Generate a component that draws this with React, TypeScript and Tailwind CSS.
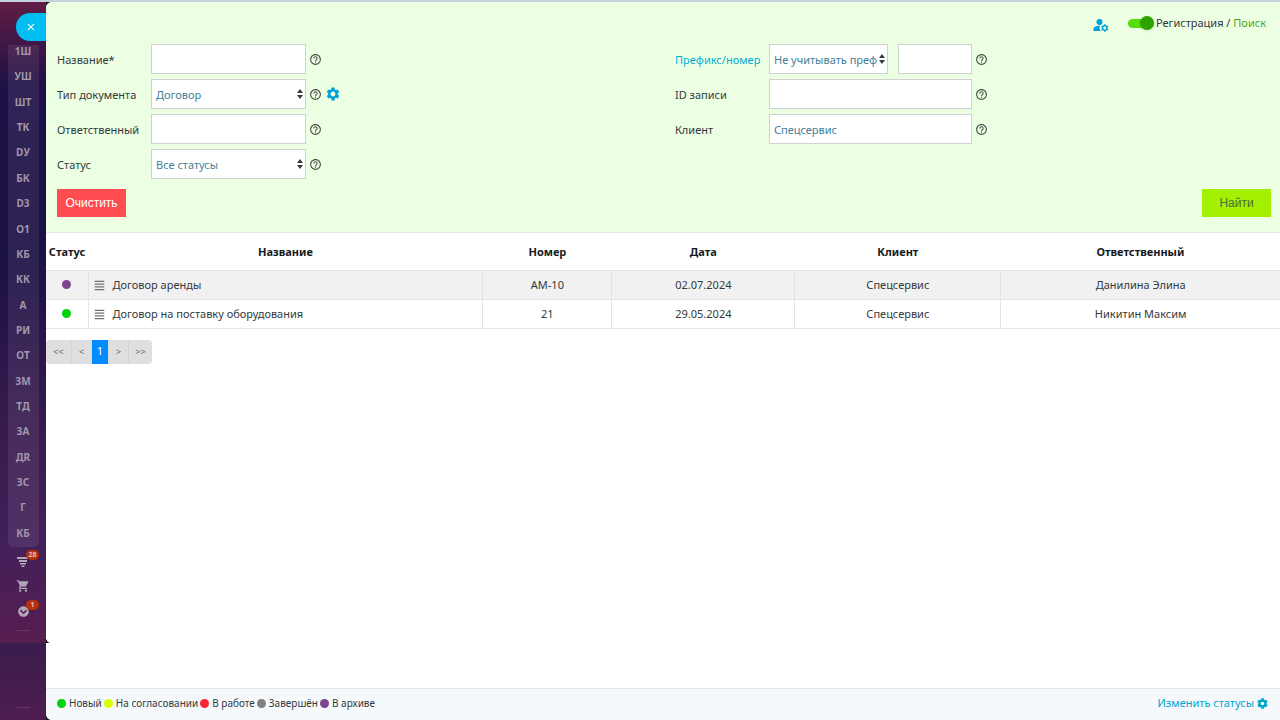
import type { ReactNode } from 'react';
import { MdClose, MdHelpOutline, MdManageAccounts, MdSettings, MdShoppingCart } from 'react-icons/md';
import { FaAlignJustify, FaChevronCircleDown, FaCog } from 'react-icons/fa';
import clsx from 'clsx';

const shortcuts = [
  '1Ш', 'УШ', 'ШТ', 'ТК', 'DУ', 'БК', 'D3', 'О1', 'КБ', 'КК',
  'А', 'РИ', 'ОТ', 'ЗМ', 'ТД', 'ЗА', 'ДR', 'ЗС', 'Г', 'КБ',
];

const statuses = [
  { label: 'Новый', color: 'bg-[#00d30e]' },
  { label: 'На согласовании', color: 'bg-[#d8ff00]' },
  { label: 'В работе', color: 'bg-[#fa2337]' },
  { label: 'Завершён', color: 'bg-[#808080]' },
  { label: 'В архиве', color: 'bg-[#7d458c]' },
];

const columns = [
  { label: 'Статус', width: 'w-[42px]' },
  { label: 'Название', width: 'w-[32%]' },
  { label: 'Номер', width: 'w-[129px]' },
  { label: 'Дата', width: 'w-[183px]' },
  { label: 'Клиент', width: 'w-[206px]' },
  { label: 'Ответственный', width: '' },
];

const documents = [
  { color: 'bg-[#7d458c]', status: 'В архиве', name: 'Договор аренды', cells: ['АМ-10', '02.07.2024', 'Спецсервис', 'Данилина Элина'] },
  { color: 'bg-[#00d30e]', status: 'Новый', name: 'Договор на поставку оборудования', cells: ['21', '29.05.2024', 'Спецсервис', 'Никитин Максим'] },
];

const pages = [
  { label: '<<', width: 'w-[25px]' },
  { label: '<', width: 'w-5' },
  { label: '1', width: 'w-[17px]' },
  { label: '>', width: 'w-5' },
  { label: '>>', width: 'w-6' },
];

const box = 'h-[30px] w-full border border-[#cfd2d4] bg-white px-1 text-[11px] text-[#457f97] outline-none';

function Badge({ children }: { children: ReactNode }) {
  return (
    <span className="absolute -top-1 left-[10px] flex h-[10px] w-[13px] items-center justify-center rounded-full bg-[#b8300a] text-[7px] font-bold text-[#d8c4cc]">
      {children}
    </span>
  );
}

function Sidebar() {
  return (
    <aside className="flex w-[46px] shrink-0 flex-col bg-[#451b4f]">
      <div className="relative flex h-[641px] flex-col items-center bg-[linear-gradient(#601d45_0%,#1f1147_13%,#1b1044_40%,#3a1b50_68%,#43205a_85%,#571d50_100%)] pt-[11px]">
        <button aria-label="Закрыть" className="flex h-7 w-[30px] shrink-0 items-center justify-center self-end rounded-l-full bg-[#00bdf2] text-white">
          <MdClose size={12} />
        </button>
        <nav className="mt-1 flex h-[502px] w-[31px] shrink-0 flex-col items-center justify-between rounded-b-md bg-white/8 pb-2">
          {shortcuts.map((label, i) => (
            <a key={i} href="#" className="text-[10px] leading-3 font-bold text-[#a397ab]">{label}</a>
          ))}
        </nav>
        <div className="mt-[7px] flex flex-col items-center gap-[11px] text-[#b3a5b8]">
          <a href="#" aria-label="Фильтр" className="relative flex h-[14px] w-[14px] items-center justify-center">
            <svg width="12" height="11" viewBox="0 0 12 11" fill="currentColor">
              <path d="M0 1h12v2H0zM2 4h8v2H2zM3 7h6v1.5H3zM4.5 9.5h3V11h-3z" />
            </svg>
            <Badge>28</Badge>
          </a>
          <a href="#" aria-label="Корзина"><MdShoppingCart size={14} /></a>
          <a href="#" aria-label="Задачи" className="relative flex h-[14px] w-[14px] items-center justify-center">
            <FaChevronCircleDown size={11} />
            <Badge>1</Badge>
          </a>
        </div>
        <hr className="mt-3 w-[14px] border-[#6a3565]" />
        <svg className="absolute bottom-0 left-full" width="4" height="4" viewBox="0 0 4 4" fill="#10101a">
          <path d="M0 0Q1 3 4 4H0z" />
        </svg>
      </div>
      <div className="flex flex-1 flex-col items-center justify-end bg-linear-to-b from-[#3b1c4e] to-[#4e1d50] pb-3">
        <hr className="w-[14px] border-[#6a3565]" />
      </div>
    </aside>
  );
}

function Help() {
  return (
    <button type="button" aria-label="Справка" className="ml-[3px] text-[#4a4f4a]">
      <MdHelpOutline size={13} />
    </button>
  );
}

interface FieldProps { id: string; label: string; accent?: boolean; children: ReactNode; }

function Field({ id, label, accent, children }: FieldProps) {
  return (
    <div className="flex h-[30px] items-center">
      <label htmlFor={id} className={clsx('w-[94px] shrink-0 pt-0.5', accent && 'text-[#00afd5]')}>{label}</label>
      {children}
    </div>
  );
}

function Select({ id, value, width }: { id: string; value: string; width: string }) {
  return (
    <div className={clsx('relative', width)}>
      <select id={id} className={clsx(box, 'appearance-none pt-0.5')}>
        <option>{value}</option>
      </select>
      <svg className="pointer-events-none absolute top-[10px] right-[3px]" width="6" height="10" viewBox="0 0 6 10" fill="#343a40">
        <path d="M3 0l3 4H0zM0 6h6l-3 4z" />
      </svg>
    </div>
  );
}

function SearchForm() {
  return (
    <form className="border-b border-[#e3ebe8] bg-[#edffe2] pr-[9px] pb-[15px] pl-[11px]">
      <div className="flex h-[42px] items-center justify-end pr-[5px]">
        <button type="button" aria-label="Настройки пользователя" className="mt-1 mr-[18px] text-[#00a1da]">
          <MdManageAccounts size={18} />
        </button>
        <label className="flex items-center">
          <input type="checkbox" defaultChecked className="peer sr-only" />
          <span className="mr-0.5 flex h-[9px] w-[26px] items-center justify-end rounded-full bg-[#56dd0b]">
            <span className="h-[14px] w-[14px] rounded-full bg-[#2ca300] shadow-sm" />
          </span>
          <span>Регистрация / <span className="text-[#48a81c]">Поиск</span></span>
        </label>
      </div>

      <div className="grid grid-cols-2 gap-x-[22px]">
        <div className="flex flex-col gap-[5px]">
          <Field id="title" label="Название*">
            <div className="w-[155px]"><input id="title" className={box} /></div>
            <Help />
          </Field>
          <Field id="type" label="Тип документа">
            <Select id="type" value="Договор" width="w-[155px]" />
            <Help />
            <button type="button" aria-label="Настроить типы" className="ml-[3px] text-[#00a1da]"><MdSettings size={16} /></button>
          </Field>
          <Field id="owner" label="Ответственный">
            <div className="w-[155px]"><input id="owner" className={box} /></div>
            <Help />
          </Field>
          <Field id="status" label="Статус">
            <Select id="status" value="Все статусы" width="w-[155px]" />
            <Help />
          </Field>
        </div>
        <div className="flex flex-col gap-[5px]">
          <Field id="prefix" label="Префикс/номер" accent>
            <Select id="prefix" value="Не учитывать преф" width="w-[119px]" />
            <div className="ml-[10px] w-[74px]"><input aria-label="Номер" className={box} /></div>
            <Help />
          </Field>
          <Field id="record" label="ID записи">
            <div className="w-[203px]"><input id="record" className={box} /></div>
            <Help />
          </Field>
          <Field id="client" label="Клиент">
            <div className="w-[203px]"><input id="client" defaultValue="Спецсервис" className={box} /></div>
            <Help />
          </Field>
        </div>
      </div>

      <div className="mt-[10px] flex justify-between font-['Liberation_Sans',sans-serif] text-[12px]">
        <button type="reset" className="h-7 w-[69px] bg-[#ff4c51] text-white">Очистить</button>
        <button type="button" className="h-7 w-[69px] bg-[#a3f000] text-[#4e6b45]">Найти</button>
      </div>
    </form>
  );
}

function DocumentsTable() {
  return (
    <table className="w-full table-fixed border-collapse text-center">
      <thead>
        <tr className="h-[37px] text-[#16191c]">
          {columns.map(({ label, width }) => (
            <th key={label} className={clsx('pt-0.5 font-bold whitespace-nowrap', width)}>{label}</th>
          ))}
        </tr>
      </thead>
      <tbody>
        {documents.map((doc) => (
          <tr key={doc.name} className="h-[29px] border-y border-[#e2e5e7] odd:bg-[#f1f1f1]">
            <td className="pt-0.5"><span role="img" aria-label={doc.status} className={clsx('inline-block h-[9px] w-[9px] rounded-full', doc.color)} /></td>
            <td className="border-l border-[#e2e5e7] pt-0.5 pl-[5px]">
              <div className="flex items-center gap-2">
                <FaAlignJustify size={11} className="text-[#707070]" />
                {doc.name}
              </div>
            </td>
            {doc.cells.map((cell) => (
              <td key={cell} className="border-l border-[#e2e5e7] pt-0.5">{cell}</td>
            ))}
          </tr>
        ))}
      </tbody>
    </table>
  );
}

export default function App() {
  return (
    <div className="flex min-h-screen flex-col bg-[#c3d2de] pt-0.5 font-['Noto_Sans','Open_Sans',sans-serif] text-[11px] text-[#33393d]">
      <div className="flex flex-1 bg-[#10101a]">
        <Sidebar />
        <main className="flex min-w-0 flex-1 flex-col overflow-hidden rounded-l-md bg-white">
          <SearchForm />
          <DocumentsTable />

          {/* Pagination */}
          <nav className="mt-[11px] flex h-6 self-start overflow-hidden rounded bg-[#dfdfdf] text-[9px]">
            {pages.map(({ label, width }) => (
              <button
                key={label}
                className={clsx('border-l border-[#d2d5d6] first:border-l-0', width,
                  label === '1' ? 'bg-[#008cff] text-[11px] text-white' : 'text-[#666]')}
              >
                {label}
              </button>
            ))}
          </nav>

          {/* Legend */}
          <footer className="mt-auto flex h-8 items-center justify-between border-t border-[#e3e6e8] bg-[#f5f9fb] pr-3 pb-0.5 pl-[11px]">
            <ul className="flex gap-0.5 text-[10px]">
              {statuses.map(({ label, color }) => (
                <li key={label} className="flex items-center gap-[3px]">
                  <span className={clsx('h-[9px] w-[9px] rounded-full', color)} />
                  {label}
                </li>
              ))}
            </ul>
            <a href="#" className="flex items-center gap-[3px] text-[#00a5ce]">
              Изменить статусы <FaCog size={11} />
            </a>
          </footer>
        </main>
      </div>
    </div>
  );
}
